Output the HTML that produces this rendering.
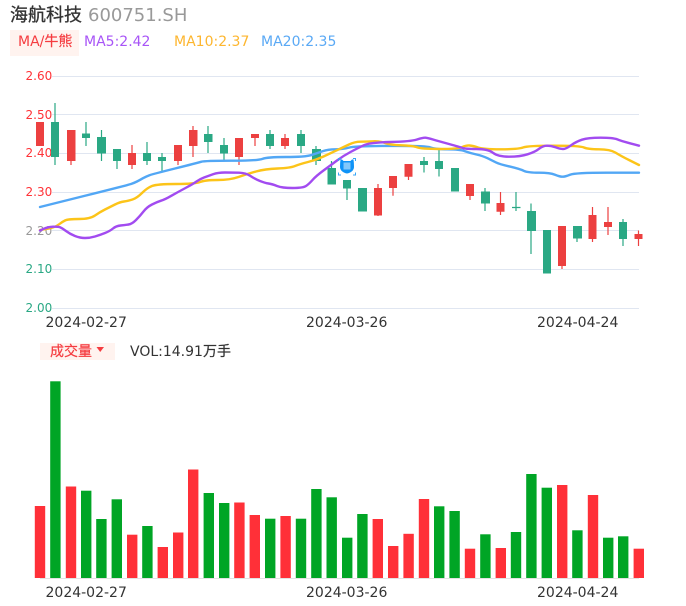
<!DOCTYPE html>
<html lang="zh">
<head>
<meta charset="utf-8">
<title>海航科技</title>
<style>
html,body{margin:0;padding:0;background:#fff;width:686px;height:606px;overflow:hidden}
svg{display:block}
text{font-family:"DejaVu Sans","Noto Sans CJK SC",sans-serif}
</style>
</head>
<body>
<svg width="686" height="606" viewBox="0 0 686 606" xmlns="http://www.w3.org/2000/svg">
<rect width="686" height="606" fill="#fff"/>
<text x="10" y="21" font-size="18" fill="#333" stroke="#333" stroke-width="0.3">海航科技</text>
<text x="88" y="21" font-size="18" fill="#999">600751.SH</text>
<rect x="10" y="30" width="69" height="26" fill="#fff3ef"/>
<text x="18" y="46" font-size="14" fill="#f53c40">MA/<tspan stroke="#f53c40" stroke-width="0.2">牛熊</tspan></text>
<text x="84" y="46" font-size="14" fill="#a855f7">MA5:2.42</text>
<text x="174" y="46" font-size="14" fill="#fdb62f">MA10:2.37</text>
<text x="261" y="46" font-size="14" fill="#5aa9f5">MA20:2.35</text>

<g stroke="#e0e6f1" stroke-width="1">
<path d="M52 76.5H639M52 114.5H639M52 153.5H639M52 192.5H639M52 230.5H639M52 269.5H639M52 308.5H639"/>
</g>
<g font-size="12">
<text x="25.5" y="80" fill="#ff3338">2.60</text>
<text x="25.5" y="119" fill="#ff3338">2.50</text>
<text x="25.5" y="157" fill="#ff3338">2.40</text>
<text x="25.5" y="196" fill="#ff3338">2.30</text>
<text x="25.5" y="235" fill="#999">2.20</text>
<text x="25.5" y="273" fill="#2aa884">2.10</text>
<text x="25.5" y="312" fill="#2aa884">2.00</text>
</g>

<path stroke="#ec4040" stroke-width="1.2" fill="none" d="M71 161V165M132 145V169M178 161V165M193 126V157M239 157V165M255 138V146M285 134V149M378 184V216M393 188V195.7M408.5 176V180M470 196V200M500.5 192V215M562 266V269M592.5 207V242M608 207V235M638.5 230.5V246"/>
<path fill="#ec4040" d="M36 122h8v24h-8zM67 130h8.500v31h-8.500zM128 153h8v12h-8zM174 145h8v16h-8zM189 130h8.500v16h-8.500zM235 138h8v19h-8zM251 134h8v4h-8zM281 138h8v8h-8zM374 188h8v27.500h-8zM389 176h8v12h-8zM404.500 164h8v12.700h-8zM466 184h8v12h-8zM496.500 203h8v8.700h-8zM558 226h8v40h-8zM588.500 215h8v24h-8zM604 222h8v5h-8zM634.500 234h8v5h-8z"/>
<path stroke="#2aa884" stroke-width="1.2" fill="none" d="M55 103V165M86 122V146M101.500 130V161M117 161V169M147 142V165M162 153V172M208 126V153M224 138V161M270 130V149M301 130V153M316 146V165M331.500 161V170M347 188V200M424 157V172.500M439 150V176.500M485 188V211M516 192V211M512 207.500H520.500M531 203.500V254M577 238V242M623 219V246"/>
<path fill="#2aa884" d="M51 122h8v35h-8zM82 133.500h8v4.500h-8zM97 137h9v16.500h-9zM113 149h8v12h-8zM143 153h8v8h-8zM158 157h8v4h-8zM204 134h8.500v8h-8.500zM220 145h8v8.500h-8zM266 134h8v12h-8zM297 134h8v12h-8zM312 149h9v12h-9zM327.500 168h8.500v16.500h-8.500zM343 180h8v8.500h-8zM358 188h9v23.500h-9zM420 161h8v4h-8zM435 161h8v8h-8zM451 168h8v23.500h-8zM481 191.500h9v12h-9zM527 211h9v20h-9zM543 230h8v43.500h-8zM573 226h9v12.500h-9zM619 222h8v17h-8z"/>

<g fill="none" stroke-width="2.4" stroke-linejoin="round" stroke-linecap="round">
<path stroke="#52a7f5" d="M40 207L84 196Q128 185 131 184Q134 183 137 181.500Q140 180 143 178.200Q146 176.500 149.500 175.200Q153 174 175 168.500Q197 163 201 161.800Q205 160.700 231.500 160.700Q258 160.700 262.500 158.900Q267 157 286 157Q305 157 311 155.200Q317 153.300 322.500 151.300Q328 149.300 335.500 149.300Q343 149.300 349 147.600Q355 146 390.500 145.900Q426 145.700 430.500 147.500Q435 149.300 447.500 149.300Q460 149.300 465 151.200Q470 153 476.500 154.500Q483 156 487.500 158.200Q492 160.500 496 162.400Q500 164.300 510 166.600Q520 169 524 170.900Q528 172.700 539 172.700Q550 172.700 555 174.700Q560 176.700 562.500 176.700Q565 176.700 570 174.700Q575 172.700 607 172.700L639 172.700"/>
<path stroke="#fcc419" d="M40 230L45 229.200Q50 228.500 53.500 227.200Q57 226 59.500 224Q62 222 65 220.500Q68 219 79 219Q90 219 95 215.500Q100 212 105 209.500Q110 207 115 204.500Q120 202 124 201.500Q128 201 132.500 199.500Q137 198 142 193Q147 188 152 186Q157 184 176 184Q195 184 200 182Q205 180 217.500 180Q230 180 238.500 177Q247 174 256 171.500Q265 169 277.500 168.500Q290 168 295 166Q300 164 308 162Q316 160 323.500 156.500Q331 153 337 150.200Q343 147.300 349 144.500Q355 141.700 360.500 141.700Q366 141.700 373 141.300Q380 141 385 143Q390 145 401.500 145.300Q413 145.700 417 147.300Q421 149 439.500 149Q458 149 462 147.200Q466 145.300 469.500 145.500Q473 145.700 478 147.500Q483 149.300 500.500 149.300Q518 149.300 523 147.500Q528 145.700 554 145.700Q580 145.700 584 147.500Q588 149.300 599 149.300Q610 149.300 615.500 152.600Q621 156 630 160.500L639 165"/>
<path stroke="#a24bf0" d="M40 230.500L44 228.700Q48 227 53 226.700Q58 226.500 60 227.200Q62 228 66 231Q70 234 75 236Q80 238 85 238Q90 238 95 236.500Q100 235 105 233Q110 231 113 228.500Q116 226 120.500 225.500Q125 225 128.500 224.500Q132 224 136 220Q140 216 143.500 211.500Q147 207 152 204.500Q157 202 161 200.700Q165 199.500 171.500 195.700Q178 192 185.500 188Q193 184 196.500 181.500Q200 179 204 177.500Q208 176 213 174.200Q218 172.500 225 172.500Q232 172.500 239 172.700Q246 173 250.500 176Q255 179 260 181Q265 183 268.500 183.500Q272 184 277 186Q282 188 292.500 188Q303 188 306 186Q309 184 312.500 180Q316 176 323.500 170.500Q331 165 337 160.500Q343 156 350.500 152Q358 148 364 145.200Q370 142.500 390.500 142Q411 141.500 417 139.500Q423 137.500 425.500 137.700Q428 138 433 139.500Q438 141 449 144Q460 147 462.500 148Q465 149 476.500 149Q488 149 493 152.800Q498 156.700 509 156.700Q520 156.700 527.500 154.300Q535 152 539 148.800Q543 145.700 547 145.700Q551 145.700 555.500 147.300Q560 149 563 149Q566 149 571 145.300Q576 141.700 582 139.700Q588 137.700 600.500 137.700Q613 137.700 617 139.300Q621 141 630 143.300L639 145.700"/>
</g>

<path d="M338.500 161V158.500H341M353 158.500H355.500V161M338.500 172.500V175H341M353 175H355.500V172.500" fill="none" stroke="#38a6f5" stroke-width="1"/>
<path d="M340.500 159.500Q342 159 343.500 161H350.500Q352 159 353.500 159.500Q354 163 354 167C354 170.500 350.500 173 347 173.500C343.500 173 340 170.500 340 167Q340 163 340.500 159.500Z" fill="#0f93f7"/>
<rect x="343.500" y="162.500" width="7" height="7" fill="#82c8fb"/>

<g font-size="14" fill="#333">
<text x="45.500" y="327">2024-02-27</text>
<text x="306" y="327">2024-03-26</text>
<text x="537" y="327">2024-04-24</text>
</g>

<rect x="40" y="343" width="75" height="17" fill="#fff3ef"/>
<text x="50" y="356" font-size="14" fill="#f53c40" stroke="#f53c40" stroke-width="0.2">成交量</text>
<path d="M96.500 347H104L100.200 352Z" fill="#f53c40"/>
<text x="130" y="356" font-size="14" fill="#333">VOL:14.91<tspan stroke="#333" stroke-width="0.2">万手</tspan></text>

<path d="M40 578.500H639" stroke="#e3e3e3" stroke-width="1"/>
<g fill="#ff3038">
<rect x="34.800" y="506" width="10.400" height="72"/>
<rect x="65.800" y="486.500" width="10.400" height="91.500"/>
<rect x="127" y="534.700" width="10.400" height="43.300"/>
<rect x="157.600" y="547" width="10.400" height="31"/>
<rect x="173" y="532.500" width="10.400" height="45.500"/>
<rect x="188" y="469.500" width="10.400" height="108.500"/>
<rect x="234.200" y="502.500" width="10.400" height="75.500"/>
<rect x="249.600" y="515" width="10.400" height="63"/>
<rect x="280.400" y="516" width="10.400" height="62"/>
<rect x="372.600" y="519" width="10.400" height="59"/>
<rect x="388" y="546" width="10.400" height="32"/>
<rect x="403.400" y="533.800" width="10.400" height="44.200"/>
<rect x="418.800" y="499" width="10.400" height="79"/>
<rect x="464.800" y="548.700" width="10.400" height="29.300"/>
<rect x="495.600" y="548" width="10.400" height="30"/>
<rect x="557" y="485" width="10.400" height="93"/>
<rect x="587.800" y="495" width="10.400" height="83"/>
<rect x="633.600" y="548.700" width="10.400" height="29.300"/>
</g>
<g fill="#00a525">
<rect x="50.200" y="381.300" width="10.400" height="196.700"/>
<rect x="81" y="490.700" width="10.400" height="87.300"/>
<rect x="96.200" y="519" width="10.400" height="59"/>
<rect x="111.600" y="499.300" width="10.400" height="78.700"/>
<rect x="142.200" y="526" width="10.400" height="52"/>
<rect x="203.600" y="493" width="10.400" height="85"/>
<rect x="219" y="503" width="10.400" height="75"/>
<rect x="265" y="518.700" width="10.400" height="59.300"/>
<rect x="295.800" y="518.700" width="10.400" height="59.300"/>
<rect x="311.200" y="489" width="10.400" height="89"/>
<rect x="326.500" y="497.300" width="10.400" height="80.700"/>
<rect x="342" y="537.700" width="10.400" height="40.300"/>
<rect x="357.200" y="514" width="10.400" height="64"/>
<rect x="434" y="506.300" width="10.400" height="71.700"/>
<rect x="449.400" y="511" width="10.400" height="67"/>
<rect x="480.200" y="534.300" width="10.400" height="43.700"/>
<rect x="510.800" y="532" width="10.400" height="46"/>
<rect x="526.200" y="474" width="10.400" height="104"/>
<rect x="541.600" y="487.700" width="10.400" height="90.300"/>
<rect x="572.200" y="530.300" width="10.400" height="47.700"/>
<rect x="603" y="537.700" width="10.400" height="40.300"/>
<rect x="618" y="536.300" width="10.400" height="41.700"/>
</g>
<g font-size="14" fill="#333">
<text x="45.500" y="597">2024-02-27</text>
<text x="306" y="597">2024-03-26</text>
<text x="537" y="597">2024-04-24</text>
</g>
</svg>
</body>
</html>
